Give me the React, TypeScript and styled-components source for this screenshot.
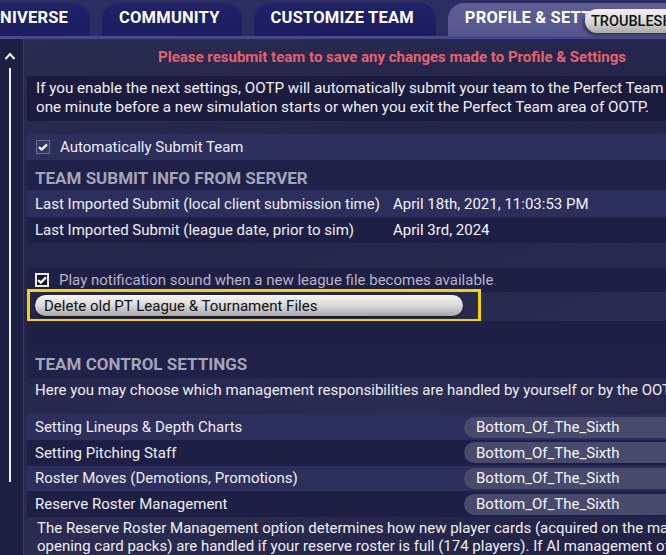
import styled, { createGlobalStyle } from 'styled-components';

const GlobalStyle = createGlobalStyle`
  html, body {
    margin: 0;
    padding: 0;
    background: #22244a;
    overflow: hidden;
  }
  body {
    font-family: Roboto, 'Liberation Sans', sans-serif;
    color: #f0f0f5;
  }
`;

const Screen = styled.div`
  position: relative;
  width: 666px;
  height: 555px;
  overflow: hidden;
  display: flex;
  flex-direction: column;
  background-color: #23254b;
  background-image: linear-gradient(
    160deg,
    rgba(255 255 255 / 0.03) 0%,
    rgba(255 255 255 / 0) 40%,
    rgba(255 255 255 / 0.03) 70%,
    rgba(0 0 0 / 0.08) 100%
  );
`;

const TabBar = styled.div`
  display: flex;
  align-items: flex-end;
  gap: 12px;
  height: 36px;
  flex: none;
  background: #2c2e62;
  border-bottom: 3px solid #47498a;
  white-space: nowrap;
`;

const Tab = styled.div<{ $active?: boolean; $offset?: number }>`
  height: 33px;
  display: flex;
  align-items: center;
  padding: 0 22px 4px 17px;
  box-sizing: border-box;
  margin-left: ${(p) => (p.$offset ? `${p.$offset}px` : '0')};
  flex: none;
  border-radius: 16px 16px 0 0;
  background: ${(p) =>
    p.$active
      ? 'linear-gradient(180deg, #5f5f98 0%, #55558d 100%)'
      : 'linear-gradient(180deg, #20226a 0%, #1b1d5e 100%)'};
  font-size: 16.5px;
  font-weight: 700;
  letter-spacing: 0.2px;
  color: #ffffff;
  min-width: ${(p) => (p.$active ? '240px' : 'auto')};
`;

const TroubleButton = styled.div`
  position: absolute;
  top: 9px;
  left: 585px;
  width: 130px;
  height: 24px;
  border-radius: 12px;
  display: flex;
  align-items: center;
  padding-left: 6px;
  box-sizing: border-box;
  background: linear-gradient(180deg, #f2f2f2 0%, #d6d6d6 55%, #a9a9a9 100%);
  box-shadow: -2px 2px 3px rgba(0 0 0 / 0.45);
  color: #111;
  font-size: 14.5px;
  font-weight: 500;
  white-space: nowrap;
`;

const Body = styled.div`
  flex: 1;
  display: flex;
  min-height: 0;
`;

const ScrollColumn = styled.div`
  width: 24px;
  flex: none;
  background: #1d1f42;
  border-right: 1px solid #3a3c68;
  display: flex;
  flex-direction: column;
  align-items: center;
  padding-top: 13px;
  box-sizing: border-box;
`;

const ScrollTrack = styled.div`
  width: 2px;
  height: 414px;
  margin-top: 8px;
  margin-right: 4px;
  background: #f2f2f6;
`;

const Content = styled.div`
  width: 730px;
  flex: none;
  padding-left: 3px;
  display: flex;
  flex-direction: column;
  white-space: nowrap;
  font-size: 15px;
`;

const Notice = styled.div`
  height: 37px;
  line-height: 37px;
  text-align: center;
  color: #e8616b;
  font-weight: 700;
  font-size: 15px;
`;

const IntroBox = styled.div`
  background: #1b1c3d;
  padding: 3px 9px 4px;
  line-height: 19px;
  font-size: 15.2px;
  margin-bottom: 13px;
`;

const Row = styled.div<{ $tone?: 'light' | 'dark' | 'none'; $h?: number }>`
  height: ${(p) => p.$h ?? 26}px;
  display: flex;
  align-items: center;
  padding-left: 8px;
  background: ${(p) =>
    p.$tone === 'light' ? '#2c2e5c' : p.$tone === 'dark' ? '#1d1f45' : 'transparent'};
`;

const SectionHeader = styled.div<{ $h?: number }>`
  height: ${(p) => p.$h ?? 31}px;
  display: flex;
  align-items: center;
  padding: 5px 0 0 8px;
  box-sizing: border-box;
  background: #1f2148;
  color: #a3a5b8;
  font-size: 17px;
  font-weight: 700;
`;

const CheckBox = styled.span<{ $variant?: 'soft' | 'bold' }>`
  width: 14px;
  height: 14px;
  box-sizing: border-box;
  margin-left: ${(p) => (p.$variant === 'bold' ? '0' : '1px')};
  margin-right: 10px;
  display: inline-flex;
  align-items: center;
  justify-content: center;
  border: ${(p) => (p.$variant === 'bold' ? '2px solid #e8e8ee' : '1px solid #6b6d92')};
  background: ${(p) => (p.$variant === 'bold' ? '#15162e' : '#35375f')};
`;

const Label = styled.span<{ $w?: number; $muted?: boolean }>`
  display: inline-block;
  flex: none;
  width: ${(p) => (p.$w ? `${p.$w}px` : 'auto')};
  color: ${(p) => (p.$muted ? '#b4b5c8' : '#eeeef4')};
`;

const Value = styled.span`
  color: #f4f4f8;
`;

const Highlight = styled.div`
  width: 454px;
  height: 33px;
  margin: -3px 0 -1px;
  box-sizing: border-box;
  border: 3px solid #f5d200;
  padding: 3px 0 0 5px;
`;

const PillButton = styled.div`
  width: 428px;
  height: 21px;
  border-radius: 11px;
  display: flex;
  align-items: center;
  padding-left: 9px;
  box-sizing: border-box;
  background: linear-gradient(180deg, #f6f6f6 0%, #d8d8d8 50%, #a8a8a8 100%);
  box-shadow: 0 1px 2px rgba(0 0 0 / 0.6);
  color: #111;
  font-size: 15px;
`;

const Select = styled.div`
  width: 270px;
  height: 21px;
  border-radius: 11px 0 0 11px;
  background: #484a6b;
  display: flex;
  align-items: center;
  padding-left: 12px;
  box-sizing: border-box;
  color: #f6f6fa;
`;

const Paragraph = styled.div`
  padding: 2px 9px 0 10px;
  line-height: 18px;
  color: #f0f0f5;
`;

const Check = () => (
  <svg width="10" height="8" viewBox="0 0 10 8">
    <path d="M1 4.2 L3.8 6.6 L9 1.4" stroke="#fff" strokeWidth="2.2" fill="none" />
  </svg>
);

const controls = [
  'Setting Lineups & Depth Charts',
  'Setting Pitching Staff',
  'Roster Moves (Demotions, Promotions)',
  'Reserve Roster Management',
];

export default function App() {
  return (
    <Screen>
      <GlobalStyle />
      <TabBar>
        <Tab $offset={-28}>UNIVERSE</Tab>
        <Tab>COMMUNITY</Tab>
        <Tab>CUSTOMIZE TEAM</Tab>
        <Tab $active>PROFILE &amp; SETTINGS</Tab>
      </TabBar>
      <TroubleButton>TROUBLESHOOTING</TroubleButton>
      <Body>
        <ScrollColumn>
          <svg width="12" height="8" viewBox="0 0 12 8" style={{ marginRight: 4 }}>
            <path d="M1.5 7 L6 2 L10.5 7" stroke="#f2f2f6" strokeWidth="2" fill="none" />
          </svg>
          <ScrollTrack />
        </ScrollColumn>
        <Content>
          <Notice>Please resubmit team to save any changes made to Profile &amp; Settings</Notice>
          <IntroBox>
            If you enable the next settings, OOTP will automatically submit your team to the Perfect Team
            <br />
            one minute before a new simulation starts or when you exit the Perfect Team area of OOTP.
          </IntroBox>
          <Row $tone="light">
            <CheckBox>
              <Check />
            </CheckBox>
            <Label>Automatically Submit Team</Label>
          </Row>
          <SectionHeader>TEAM SUBMIT INFO FROM SERVER</SectionHeader>
          <Row $tone="light" $h={27}>
            <Label $w={358}>Last Imported Submit (local client submission time)</Label>
            <Value>April 18th, 2021, 11:03:53 PM</Value>
          </Row>
          <Row $tone="dark">
            <Label $w={358}>Last Imported Submit (league date, prior to sim)</Label>
            <Value>April 3rd, 2024</Value>
          </Row>
          <Row $tone="none" $h={25} />
          <Row $tone="dark" $h={25}>
            <CheckBox $variant="bold">
              <Check />
            </CheckBox>
            <Label $muted>Play notification sound when a new league file becomes available</Label>
          </Row>
          <Row $tone="none" $h={29} style={{ paddingLeft: 0 }}>
            <Highlight>
              <PillButton>Delete old PT League &amp; Tournament Files</PillButton>
            </Highlight>
          </Row>
          <Row $tone="dark" $h={25} />
          <SectionHeader $h={32}>TEAM CONTROL SETTINGS</SectionHeader>
          <Row $tone="none" $h={24}>
            <Label>Here you may choose which management responsibilities are handled by yourself or by the OOTP AI.</Label>
          </Row>
          <Row $tone="none" $h={13} />
          {controls.map((c, i) => (
            <Row key={c} $tone={i % 2 === 0 ? 'light' : 'dark'}>
              <Label $w={429}>{c}</Label>
              <Select>Bottom_Of_The_Sixth</Select>
            </Row>
          ))}
          <Paragraph>
            The Reserve Roster Management option determines how new player cards (acquired on the market or by
            <br />
            opening card packs) are handled if your reserve roster is full (174 players). If AI management of
          </Paragraph>
        </Content>
      </Body>
    </Screen>
  );
}
